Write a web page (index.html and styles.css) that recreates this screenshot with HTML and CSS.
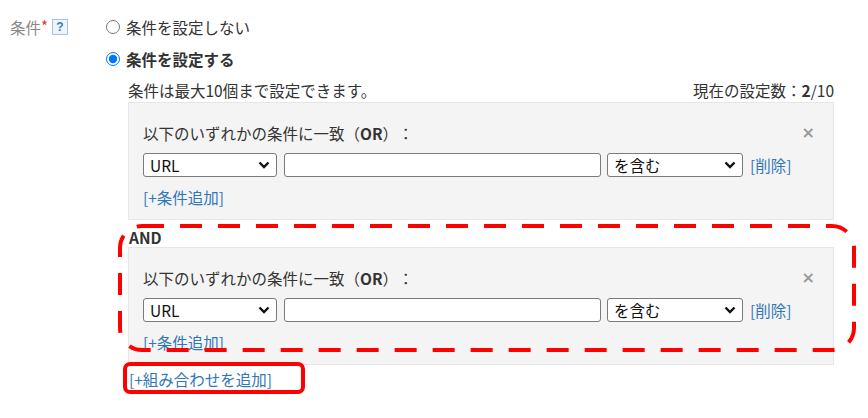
FILE: index.html
```html
<!DOCTYPE html>
<html lang="ja">
<head>
    <meta charset="UTF-8">
    <meta name="viewport" content="width=device-width, initial-scale=1.0">
    <title>条件設定</title>
    <link rel="stylesheet" href="styles.css">
</head>
<body>
    <div class="form-row">
        <div class="form-label">
            条件<span class="req">*</span>
            <span class="help">?</span>
        </div>
        <div class="form-field">
            <label class="radio"><input type="radio" name="cond"> 条件を設定しない</label>
            <label class="radio radio-on"><input type="radio" name="cond" checked> 条件を設定する</label>

            <div class="cond-area">
                <div class="cond-note">
                    <span>条件は最大10個まで設定できます。</span>
                    <span>現在の設定数：<b>2</b>/10</span>
                </div>

                <div class="cond-group">
                    <div class="group-head">
                        <span>以下のいずれかの条件に一致（<b>OR</b>）：</span>
                        <span class="close">×</span>
                    </div>
                    <div class="cond-line">
                        <span class="select-wrap sel-type">
                            <select><option>URL</option></select>
                            <svg class="chev" viewBox="0 0 12 8" width="12" height="8"><path d="M1.5 1.5 L6 6 L10.5 1.5" fill="none" stroke="#111" stroke-width="2.4"/></svg>
                        </span>
                        <input type="text" class="cond-value">
                        <span class="select-wrap sel-op">
                            <select><option>を含む</option></select>
                            <svg class="chev" viewBox="0 0 12 8" width="12" height="8"><path d="M1.5 1.5 L6 6 L10.5 1.5" fill="none" stroke="#111" stroke-width="2.4"/></svg>
                        </span>
                        <a href="#" class="link">[削除]</a>
                    </div>
                    <a href="#" class="link">[+条件追加]</a>
                </div>

                <div class="and-block">
                    <div class="and-label">AND</div>
                    <div class="cond-group">
                        <div class="group-head">
                            <span>以下のいずれかの条件に一致（<b>OR</b>）：</span>
                            <span class="close">×</span>
                        </div>
                        <div class="cond-line">
                            <span class="select-wrap sel-type">
                                <select><option>URL</option></select>
                                <svg class="chev" viewBox="0 0 12 8" width="12" height="8"><path d="M1.5 1.5 L6 6 L10.5 1.5" fill="none" stroke="#111" stroke-width="2.4"/></svg>
                            </span>
                            <input type="text" class="cond-value">
                            <span class="select-wrap sel-op">
                                <select><option>を含む</option></select>
                                <svg class="chev" viewBox="0 0 12 8" width="12" height="8"><path d="M1.5 1.5 L6 6 L10.5 1.5" fill="none" stroke="#111" stroke-width="2.4"/></svg>
                            </span>
                            <a href="#" class="link">[削除]</a>
                        </div>
                        <a href="#" class="link">[+条件追加]</a>
                    </div>
                    <!-- annotation: dashed highlight -->
                    <svg class="mark-dashed" width="738" height="128" viewBox="0 0 738 128">
                        <rect x="2" y="2" width="734" height="124" rx="22" ry="22" fill="none" stroke="#f00" stroke-width="4" stroke-dasharray="22 16"/>
                    </svg>
                </div>

                <div class="add-combo">
                    <a href="#" class="link">[+組み合わせを追加]</a>
                    <span class="mark-solid"></span>
                </div>
            </div>
        </div>
    </div>
</body>
</html>
```

FILE: styles.css
```css
* {
    margin: 0;
    padding: 0;
    box-sizing: border-box;
}

html,
body {
    min-height: 100%;
}

body {
    font-family: "Noto Sans CJK JP", "Noto Sans", sans-serif;
    font-size: 15.5px;
    line-height: 20px;
    color: #333;
    background: #fff;
    padding: 17px 0 30px;
    min-height: 418px;
    text-spacing-trim: space-all;
}

.form-row {
    display: flex;
}

.form-label {
    width: 106px;
    padding-left: 10px;
    color: #888;
    display: flex;
    align-items: flex-start;
}

.req {
    color: #e5332a;
    font-size: 15px;
    line-height: 18px;
}

.help {
    display: inline-block;
    width: 16px;
    height: 16px;
    margin: 2px 0 0 4px;
    border: 1px solid #a9c3de;
    background: #eef4fa;
    color: #3a78b8;
    font-family: "Liberation Sans", sans-serif;
    font-size: 12px;
    font-weight: bold;
    line-height: 14px;
    text-align: center;
}

.form-field {
    display: flex;
    flex-direction: column;
}

.radio {
    display: flex;
    align-items: center;
    gap: 6px;
    height: 20px;
    margin-bottom: 12px;
}

.radio input {
    width: 14px;
    height: 14px;
    margin: 0;
    accent-color: #0075ff;
}

.radio-on {
    font-weight: bold;
    margin-bottom: 11px;
}

.cond-area {
    margin-left: 22px;
    width: 706px;
}

.cond-note {
    display: flex;
    justify-content: space-between;
    margin-bottom: 2px;
}

.cond-group {
    background: #f4f4f4;
    border: 1px solid #e6e6e6;
    padding: 20px 18px 12px 14px;
}

.group-head {
    display: flex;
    justify-content: space-between;
    align-items: center;
}

.close {
    color: #999;
    font-family: "DejaVu Sans", sans-serif;
    font-weight: bold;
    font-size: 16px;
}

.cond-line {
    display: flex;
    align-items: center;
    margin: 10px 0;
}

.select-wrap {
    position: relative;
    display: inline-block;
}

.select-wrap select {
    appearance: none;
    height: 24px;
    border: 1px solid #7a7a7a;
    border-radius: 3px;
    background: #fff;
    font-family: inherit;
    font-size: 15.5px;
    color: #111;
    padding: 0 6px;
}

.sel-type select {
    width: 134px;
}

.sel-op select {
    width: 136px;
}

.chev {
    position: absolute;
    right: 7px;
    top: 8px;
    pointer-events: none;
}

.cond-value {
    width: 317px;
    height: 24px;
    margin: 0 6px 0 7px;
    border: 1px solid #7a7a7a;
    border-radius: 3px;
    background: #fff;
}

.cond-line .link {
    margin-left: 7px;
}

.link {
    color: #2f78b7;
    text-decoration: none;
}

.and-block {
    position: relative;
    margin-top: 7px;
}

.and-label {
    font-weight: bold;
    padding-left: 1px;
}

.mark-dashed {
    position: absolute;
    left: -10px;
    top: -3px;
}

.add-combo {
    position: relative;
    margin-top: 4px;
    padding-left: 1px;
    height: 20px;
}

.mark-solid {
    position: absolute;
    left: -5px;
    top: -7px;
    width: 182px;
    height: 32px;
    border: 4px solid #f00;
    border-radius: 7px;
}
```
